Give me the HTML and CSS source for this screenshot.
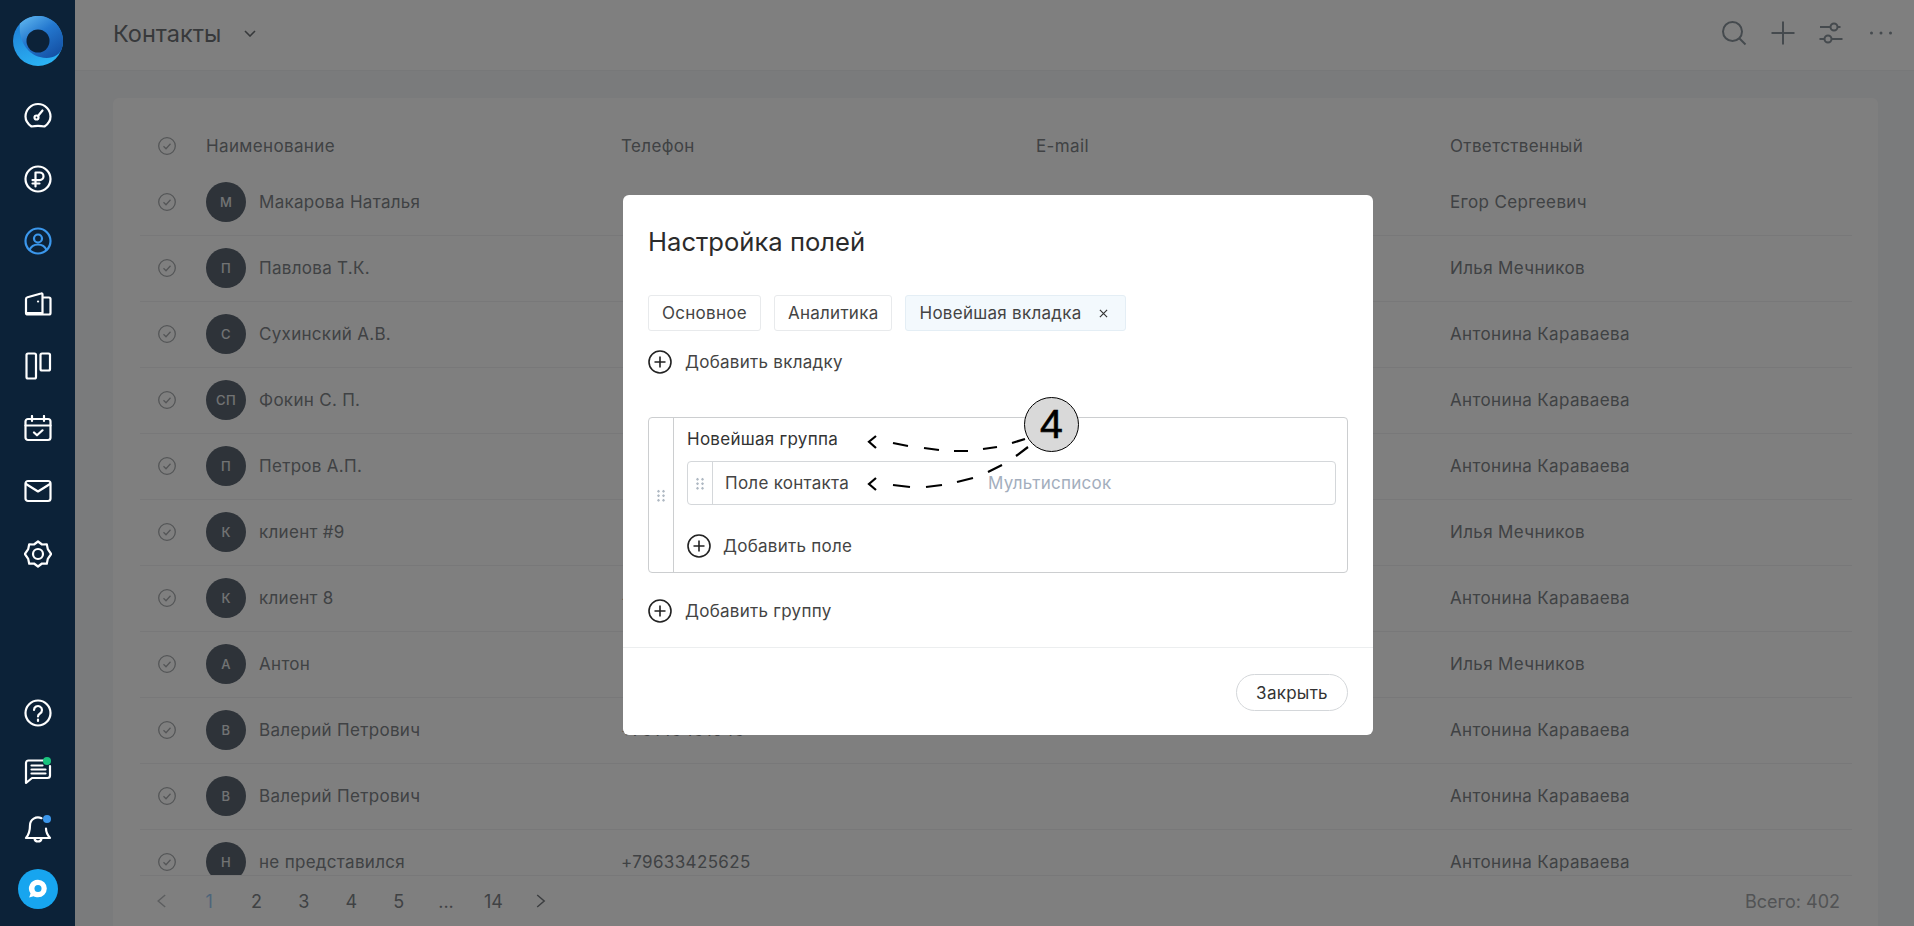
FILE: index.html
```html
<!doctype html>
<html lang="ru">
<head>
<meta charset="utf-8" />
<title>Контакты</title>
<link rel="stylesheet" href="styles.css">
</head>
<body>

<aside class="sidebar">
	<svg class="logo" viewBox="0 0 50 50">
		<defs>
			<linearGradient id="logoOuter" x1="0.2" y1="0.1" x2="0.6" y2="1">
				<stop offset="0" stop-color="#1f7fd6"/>
				<stop offset="1" stop-color="#2bb4f5"/>
			</linearGradient>
			<linearGradient id="logoInner" x1="0.1" y1="0" x2="0.8" y2="1">
				<stop offset="0" stop-color="#5fb6ef"/>
				<stop offset="0.45" stop-color="#2478cf"/>
				<stop offset="1" stop-color="#1450a4"/>
			</linearGradient>
		</defs>
		<circle cx="25" cy="25" r="25" fill="url(#logoOuter)"/>
		<path d="M7 7.500A25 25 0 0 1 50 25C50 27 49.800 29 49.300 31C47 41 36 43.500 27 41C15 38 5 25 7 7.500Z" fill="url(#logoInner)"/>
		<circle cx="25" cy="25" r="11.500" fill="#0c2238"/>
	</svg>

	<nav class="nav">
		<a class="nav-item"><svg viewBox="0 0 28 28"><path d="M7.500 24.500C4.400 22.400 1.500 19 1.500 14.500a12.500 12.500 0 0 1 25 0c0 4.500-2.900 7.900-6 10C16 23.500 12 23.500 7.500 24.500z"/><circle cx="12.500" cy="15.500" r="2"/><path d="M14 14l4.500-5.500"/></svg></a>
		<a class="nav-item"><svg viewBox="0 0 28 28"><circle cx="14" cy="14" r="12.500"/><path d="M11.500 21.500V7.500h4.200a3.800 3.800 0 0 1 0 7.600H8.500M8.500 18.500h7"/></svg></a>
		<a class="nav-item is-active"><svg viewBox="0 0 28 28"><circle cx="14" cy="14" r="12.500"/><circle cx="14" cy="11.500" r="4"/><path d="M5.500 23c1.500-3.500 4.500-5.500 8.500-5.500s7 2 8.500 5.500"/></svg></a>
		<a class="nav-item"><svg viewBox="0 0 28 28"><path d="M2 23V9c0-1 .5-1.500 1.500-1.800L17 3.500c1-.3 1.500.3 1.500 1.200V23M18.500 7.500H25c1 0 1.500.5 1.500 1.500V23c0 1-.5 1.500-1.500 1.500H4C2.500 24.500 2 24 2 23L18.500 23M14 11.500h.1"/></svg></a>
		<a class="nav-item"><svg viewBox="0 0 28 28"><rect x="2.500" y="1.500" width="9.500" height="25" rx="1.500"/><rect x="16.500" y="1.500" width="9.500" height="17" rx="1.500"/></svg></a>
		<a class="nav-item"><svg viewBox="0 0 28 28"><rect x="1.500" y="4" width="25" height="21" rx="2.500"/><path d="M1.500 10.500h25M8 1v5M20 1v5M10 17.500l3 2.800 5.500-5"/></svg></a>
		<a class="nav-item"><svg viewBox="0 0 28 28"><rect x="1.500" y="4" width="25" height="20" rx="2.500"/><path d="M2 7l12 7.500L26 7"/></svg></a>
		<a class="nav-item"><svg viewBox="0 0 28 28"><path d="M14 1.500l4 3 4.800-.2 1 4.800 3.400 4.900-3.400 4.900-1 4.800-4.800-.2-4 3-4-3-4.800.2-1-4.800L.8 14l3.400-4.900 1-4.800 4.800.2z"/><circle cx="14" cy="14" r="5"/></svg></a>
	</nav>

	<nav class="nav nav-bottom">
		<a class="nav-item small"><svg viewBox="0 0 28 28"><circle cx="14" cy="14" r="12.500"/><path d="M10 11a4 4 0 1 1 6 3.500c-1.300.8-2 1.500-2 3M14 20.500v1.500"/></svg></a>
		<a class="nav-item small"><svg viewBox="0 0 28 28"><path d="M20 3.500H4.500C3 3.500 2 4.500 2 6v20l6-5h15.500c1.500 0 2.500-1 2.500-2.500V9M7.500 8.500h11M7.500 12.500h14M7.500 16.500h14"/></svg><i class="dot dot-green"></i></a>
		<a class="nav-item small"><svg viewBox="0 0 28 28"><path d="M17.500 3.200A8 8 0 0 0 6 10.500c0 7-1.500 9.500-4 12.500h24c-2.500-3-4-5-4-9.500M10.500 23.500c.5 4 6.500 4 7 0"/></svg><i class="dot dot-blue"></i></a>
		<a class="help-bubble"><svg viewBox="0 0 20 20"><path d="M10 1.500a8 8 0 0 1 0 16c-1.500 0-3-.3-4-1l-4 1.200 1.200-3.700A8 8 0 0 1 10 1.500z" fill="#fff"/><circle cx="10" cy="9.500" r="3.200" fill="#17a5ef"/></svg></a>
	</nav>
</aside>

<main class="main">
	<header class="topbar">
		<h1 class="page-title">Контакты</h1>
		<svg class="chevron" viewBox="0 0 12 7"><path d="M1 1l5 5 5-5"/></svg>
		<div class="topbar-tools">
			<svg viewBox="0 0 28 28"><circle cx="12.500" cy="12.500" r="9.500"/><path d="M19.500 19.500l6 6"/></svg>
			<svg viewBox="0 0 28 28"><path d="M14 2.500v23M2.500 14h23"/></svg>
			<svg viewBox="0 0 28 28"><circle cx="16" cy="8" r="3.500"/><circle cx="10" cy="20" r="3.500"/><path d="M2 8h10.500M19.500 8h3M1.500 20h5M13.500 20h11"/></svg>
			<svg viewBox="0 0 28 28"><circle class="solid" cx="4.500" cy="14" r="1.500"/><circle class="solid" cx="14" cy="14" r="1.500"/><circle class="solid" cx="23.500" cy="14" r="1.500"/></svg>
		</div>
	</header>

	<section class="card">
		<div class="table-head">
			<svg class="check" viewBox="0 0 18 18"><circle cx="9" cy="9" r="8.300"/><path d="M5.500 9.200l2.500 2.500 4.500-5"/></svg>
			<span>Наименование</span>
			<span>Телефон</span>
			<span>E-mail</span>
			<span>Ответственный</span>
		</div>

		<div class="rows" id="rows"></div>

		<footer class="pager">
			<svg class="pager-arrow faded" viewBox="0 0 10 14"><path d="M8.500 1l-7 6 7 6"/></svg>
			<span class="pager-num current">1</span>
			<span class="pager-num">2</span>
			<span class="pager-num">3</span>
			<span class="pager-num">4</span>
			<span class="pager-num">5</span>
			<span class="pager-num">...</span>
			<span class="pager-num">14</span>
			<svg class="pager-arrow" viewBox="0 0 10 14"><path d="M1.500 1l7 6-7 6"/></svg>
			<span class="pager-total">Всего: 402</span>
		</footer>
	</section>
</main>

<div class="overlay"></div>

<div class="modal">
	<h2 class="modal-title">Настройка полей</h2>

	<div class="tabs">
		<span class="tab">Основное</span>
		<span class="tab">Аналитика</span>
		<span class="tab active">Новейшая вкладка <svg class="tab-close" viewBox="0 0 10 10"><path d="M1 1l8 8M9 1l-8 8"/></svg></span>
	</div>

	<a class="add-row add-tab"><svg class="plus" viewBox="0 0 24 24"><circle cx="12" cy="12" r="11"/><path d="M12 6.500v11M6.500 12h11"/></svg>Добавить вкладку</a>

	<div class="group">
		<div class="group-handle"><i class="grip"></i></div>
		<div class="group-body">
			<div class="group-name">Новейшая группа</div>
			<div class="field">
				<div class="field-handle"><i class="grip"></i></div>
				<div class="field-name">Поле контакта</div>
				<div class="field-type">Мультисписок</div>
			</div>
			<a class="add-row add-field"><svg class="plus" viewBox="0 0 24 24"><circle cx="12" cy="12" r="11"/><path d="M12 6.500v11M6.500 12h11"/></svg>Добавить поле</a>
		</div>
	</div>

	<a class="add-row add-group"><svg class="plus" viewBox="0 0 24 24"><circle cx="12" cy="12" r="11"/><path d="M12 6.500v11M6.500 12h11"/></svg>Добавить группу</a>

	<div class="modal-footer">
		<button class="btn">Закрыть</button>
	</div>
</div>

<!-- annotation drawn on top of the screenshot -->
<svg class="callout-lines" viewBox="0 0 1914 926">
	<path d="M876 436l-7 5.700 7 6.300M893 443l15 3M924 448l15 2M954 451l14 0M983 449l14-2M1012 443l13-4"/>
	<path d="M876 478l-7 6 7 6M893 485l17 2M926 487l16-2M957 482l16-4M988 472l14-7M1016 456l12-9"/>
</svg>
<div class="callout">4</div>

<script>
const people = [
	['М', 'Макарова Наталья', '', 'Егор Сергеевич'],
	['П', 'Павлова Т.К.', '', 'Илья Мечников'],
	['С', 'Сухинский А.В.', '', 'Антонина Караваева'],
	['СП', 'Фокин С. П.', '', 'Антонина Караваева'],
	['П', 'Петров А.П.', '', 'Антонина Караваева'],
	['К', 'клиент #9', '', 'Илья Мечников'],
	['К', 'клиент 8', '+7', 'Антонина Караваева'],
	['А', 'Антон', '', 'Илья Мечников'],
	['В', 'Валерий Петрович', '+79149491049', 'Антонина Караваева'],
	['В', 'Валерий Петрович', '', 'Антонина Караваева'],
	['Н', 'не представился', '+79633425625', 'Антонина Караваева']
];

const rows = document.getElementById( 'rows' );

for ( let p of people ) {
	rows.insertAdjacentHTML( 'beforeend', `
		<div class="row">
			<svg class="check" viewBox="0 0 18 18"><circle cx="9" cy="9" r="8.300"/><path d="M5.500 9.200l2.500 2.500 4.500-5"/></svg>
			<div class="person"><span class="avatar">${p[0]}</span>${p[1]}</div>
			<div>${p[2]}</div>
			<div></div>
			<div>${p[3]}</div>
		</div>` );
}
</script>

</body>
</html>
```

FILE: styles.css
```css
:root {
	--font: "Inter", "Noto Sans", sans-serif;
	--sidebar: #0c2238;
	--blue: #3b97ec;
	--text: #444;
	/* page colours, all seen through the 50% overlay */
	--page-text: #808488;
	--page-line: #f0f1f2;
}

* {
	box-sizing: border-box;
}

html, body {
	margin: 0;
	padding: 0;
	height: 100%;
	overflow: hidden;
}

body {
	font-family: var(--font);
	font-size: 17px;
	letter-spacing: 0.36px;
	color: var(--page-text);
	background: #f5f6f8;
}


/* Sidebar */

.sidebar {
	position: fixed;
	z-index: 20;
	top: 0;
	bottom: 0;
	left: 0;
	width: 75px;
	display: flex;
	flex-direction: column;
	background: var(--sidebar);
}

.logo {
	width: 50px;
	height: 50px;
	margin: 16px 0 19px 13px;
	flex: none;
}

.nav-item {
	position: relative;
	display: flex;
	align-items: center;
	justify-content: center;
	height: 62.5px;
	color: #fff;
}

.nav-item svg {
	width: 28px;
	height: 28px;
	fill: none;
	stroke: currentColor;
	stroke-width: 2.2;
	stroke-linecap: round;
	stroke-linejoin: round;
}

.nav-item.is-active {
	color: var(--blue);
}

.nav-bottom {
	margin-top: auto;
	padding-bottom: 17px;
}

.nav-item.small {
	height: 58px;
}

.dot {
	position: absolute;
	top: 15px;
	left: 43px;
	width: 8px;
	height: 8px;
	border-radius: 50%;
}

.dot-green {
	background: #19c37d;
}

.dot-blue {
	background: var(--blue);
}

.help-bubble {
	display: flex;
	align-items: center;
	justify-content: center;
	width: 40px;
	height: 40px;
	margin: 11px 0 0 18px;
	border-radius: 50%;
	background: #17a5ef;
}

.help-bubble svg {
	width: 22px;
	height: 22px;
}


/* Page behind the modal */

.main {
	margin-left: 75px;
	height: 100%;
	display: flex;
	flex-direction: column;
}

.topbar {
	flex: none;
	display: flex;
	align-items: center;
	height: 71px;
	padding: 0 19px 0 38px;
	background: #fff;
	border-bottom: 1px solid #eef0f2;
}

.page-title {
	margin: 0 0 3px;
	font-size: 23.500px;
	letter-spacing: 0;
	font-weight: 400;
	color: #6e7276;
}

.chevron {
	width: 12px;
	height: 7px;
	margin: 0 0 4px 23px;
	fill: none;
	stroke: #6e7276;
	stroke-width: 1.6;
}

.topbar-tools {
	margin-left: auto;
	display: flex;
	gap: 21px;
	margin-top: -4px;
}

.topbar-tools svg {
	width: 28px;
	height: 28px;
	fill: none;
	stroke: #8a949c;
	stroke-width: 2;
}

.topbar-tools .solid {
	fill: #8a949c;
	stroke: none;
}

.card {
	flex: 1;
	min-height: 0;
	display: flex;
	flex-direction: column;
	margin: 27px 36px 0 38px;
	padding: 26px 26px 0 27px;
	background: #fff;
	border-radius: 6px 6px 0 0;
}

.table-head,
.row {
	display: grid;
	grid-template-columns: 66px 415px 415px 414px 1fr;
	align-items: center;
}

.table-head {
	flex: none;
	height: 46px;
	padding-bottom: 2px;
}

.rows {
	flex: none;
	height: 706px;
	overflow: hidden;
	border-bottom: 1px solid var(--page-line);
}

.row {
	height: 66px;
	padding-bottom: 2px;
	border-bottom: 1px solid var(--page-line);
}

.check {
	width: 18px;
	height: 18px;
	margin-left: 18px;
	fill: none;
	stroke: #a9acaf;
	stroke-width: 1.3;
}

.person {
	display: flex;
	align-items: center;
	gap: 13px;
	letter-spacing: 0.3px;
}

.avatar {
	display: flex;
	align-items: center;
	justify-content: center;
	flex: none;
	width: 40px;
	height: 40px;
	border-radius: 50%;
	background: #5c6672;
	color: #e4e6e8;
	font-size: 13px;
	font-weight: 500;
}

.pager {
	flex: 1;
	display: flex;
	align-items: center;
	margin-left: -2px;
	font-size: 18px;
	letter-spacing: 0;
}

.pager-num {
	width: 47.400px;
	text-align: center;
}

.pager-num.current {
	color: #9ccbf5;
}

.pager-arrow {
	width: 47.400px;
	height: 14px;
	fill: none;
	stroke: #787c80;
	stroke-width: 1.5;
}

.pager-arrow.faded {
	stroke: #b9bcbf;
}

.pager-total {
	margin-left: auto;
	margin-right: 12px;
	color: #a4a7aa;
}


/* Overlay and modal */

.overlay {
	position: fixed;
	z-index: 10;
	top: 0;
	right: 0;
	bottom: 0;
	left: 75px;
	background: rgba( 0, 0, 0, 0.5 );
}

.modal {
	position: fixed;
	z-index: 30;
	top: 195px;
	left: 623px;
	width: 750px;
	height: 540px;
	padding: 30px 25px 0;
	background: #fff;
	border-radius: 6px;
	letter-spacing: 0.27px;
	color: var(--text);
}

.modal-title {
	margin: 0;
	font-size: 25.600px;
	letter-spacing: 0;
	line-height: 34px;
	font-weight: 400;
	color: #2b2b2b;
}

.tabs {
	display: flex;
	gap: 13px;
	margin-top: 36px;
}

.tab {
	display: flex;
	align-items: center;
	height: 36px;
	padding: 0 13px;
	border: 1px solid #e8eaec;
	border-radius: 3px;
}

.tab.active {
	background: #f3f9fd;
	border-color: #e4eef5;
}

.tab-close {
	width: 9px;
	height: 9px;
	margin-left: 17px;
	margin-right: 4px;
	fill: none;
	stroke: #333;
	stroke-width: 1.3;
}

.add-row {
	display: flex;
	align-items: center;
	gap: 13px;
	height: 24px;
}

.plus {
	width: 24px;
	height: 24px;
	fill: none;
	stroke: #222;
	stroke-width: 1.6;
}

.add-tab {
	margin-top: 19px;
}

.group {
	display: flex;
	height: 156px;
	margin-top: 43px;
	border: 1px solid #ccced0;
	border-radius: 4px;
}

.group-handle {
	flex: none;
	width: 25px;
	display: flex;
	align-items: center;
	justify-content: center;
	border-right: 1px solid #ccced0;
}

/* six little dots */
.grip {
	display: block;
	width: 10px;
	height: 13px;
	background: radial-gradient( circle, #aeb8c2 1.100px, transparent 1.400px ) 0 0 / 5px 4.500px;
}

.group-body {
	flex: 1;
	padding: 10px 11px 0 13px;
}

.group-name {
	line-height: 22px;
	color: #333;
}

.field {
	display: flex;
	align-items: center;
	height: 44px;
	margin-top: 11px;
	border: 1px solid #d4d7da;
	border-radius: 4px;
}

.field-handle {
	flex: none;
	width: 25px;
	height: 100%;
	display: flex;
	align-items: center;
	justify-content: center;
	border-right: 1px solid #d4d7da;
}

.field-name {
	width: 275px;
	padding-left: 12px;
}

.field-type {
	color: #a3aebd;
}

.add-field {
	gap: 12px;
	margin-top: 29px;
}

.add-group {
	margin-top: 26px;
}

.modal-footer {
	display: flex;
	justify-content: flex-end;
	margin: 24px -25px 0;
	padding: 26px 25px 0;
	border-top: 1px solid #eceeef;
}

.btn {
	width: 112px;
	height: 37px;
	padding: 0;
	background: #fff;
	border: 1px solid #d4d7da;
	border-radius: 19px;
	font: inherit;
	letter-spacing: inherit;
	color: #333;
}


/* Callout */

.callout-lines {
	position: fixed;
	z-index: 40;
	top: 0;
	left: 0;
	width: 1914px;
	height: 926px;
	fill: none;
	stroke: #000;
	stroke-width: 2.200;
}

.callout {
	position: fixed;
	z-index: 41;
	top: 397px;
	left: 1024px;
	width: 55px;
	height: 55px;
	display: flex;
	align-items: center;
	justify-content: center;
	background: #d9d9d9;
	border: 1px solid #000;
	border-radius: 50%;
	font-family: "Liberation Sans", sans-serif;
	font-size: 41px;
	letter-spacing: 0;
	-webkit-text-stroke: 0.600px #000;
	color: #000;
}
```
